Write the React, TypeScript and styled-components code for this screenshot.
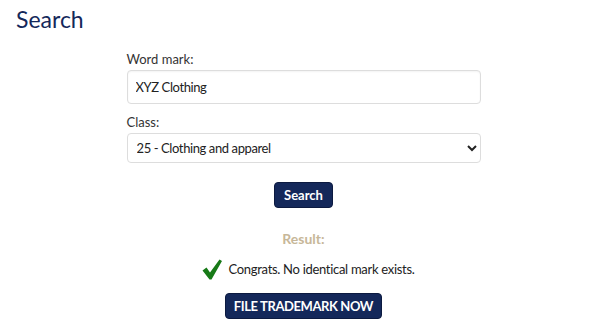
import styled, { createGlobalStyle } from "styled-components";

const GlobalStyle = createGlobalStyle`
  body {
    margin: 0;
    background: #ffffff;
    font-family: Lato, "Open Sans", sans-serif;
    color: #222222;
  }
`;

const Page = styled.div`
  padding: 0 16px;
`;

const Title = styled.h1`
  margin: 5px 0 0 0;
  font-size: 23px;
  font-weight: 400;
  color: #14285a;
  line-height: 28px;
`;

const Content = styled.div`
  padding-left: 7px;
`;

const Form = styled.form`
  width: 354px;
  margin: 18px auto 0 auto;
  display: flex;
  flex-direction: column;
`;

const Label = styled.label`
  font-size: 13px;
  line-height: 16px;
  color: #333333;
  margin-bottom: 3px;
`;

const Field = styled.div`
  display: flex;
  flex-direction: column;
  margin-bottom: 10px;
`;

const TextInput = styled.input`
  height: 34px;
  box-sizing: border-box;
  border: 1px solid #dddddd;
  border-radius: 4px;
  padding: 0 8px;
  font-family: inherit;
  font-size: 13px;
  letter-spacing: -0.4px;
  color: #222222;
  outline: none;
  box-shadow: inset 0 1px 2px rgba(0, 0, 0, 0.05);
`;

const Select = styled.select`
  height: 30px;
  box-sizing: border-box;
  border: 1px solid #dddddd;
  border-radius: 4px;
  padding: 0 5px;
  font-family: inherit;
  font-size: 13px;
  letter-spacing: -0.4px;
  color: #222222;
  background: #ffffff;
`;

const Center = styled.div`
  display: flex;
  flex-direction: column;
  align-items: center;
`;

const Button = styled.button<{ $caps?: boolean }>`
  background: #14285a;
  color: #ffffff;
  border: 1px solid #0c1a40;
  border-radius: 4px;
  font-family: inherit;
  font-weight: 700;
  font-size: 13px;
  letter-spacing: ${(p) => (p.$caps ? "-0.4px" : "0")};
  height: 26px;
  padding: 0 ${(p) => (p.$caps ? "8px" : "9px")};
  text-transform: ${(p) => (p.$caps ? "uppercase" : "none")};
  cursor: pointer;
`;

const ResultTitle = styled.div`
  margin-top: 22px;
  font-size: 14px;
  line-height: 18px;
  font-weight: 700;
  color: #c7b799;
`;

const Message = styled.div`
  margin-top: 10px;
  padding-left: 10px;
  display: flex;
  align-items: center;
  gap: 6px;
  font-size: 13px;
  letter-spacing: -0.3px;
  line-height: 22px;
  color: #222222;
  margin-bottom: 13px;
`;

const Check = styled.svg`
  width: 20px;
  height: 21px;
`;

const App = () => {
  return (
    <>
      <GlobalStyle />
      <Page>
        <Title>Search</Title>
        <Content>
          <Form onSubmit={(e) => e.preventDefault()}>
            <Label>Word mark:</Label>
            <Field>
              <TextInput type="text" defaultValue="XYZ Clothing" />
            </Field>
            <Label>Class:</Label>
            <Field>
              <Select defaultValue="25">
                <option value="25">25 - Clothing and apparel</option>
              </Select>
            </Field>
          </Form>
          <Center>
            <Button type="button" style={{ marginTop: 9 }}>Search</Button>
            <ResultTitle>Result:</ResultTitle>
            <Message>
              <Check viewBox="0 0 20 21">
                <path d="M0.5 11.5 L4.5 8.5 L8 13.5 L17.5 0.5 L20 2 L9.5 20.5 L7.5 20.5 Z" fill="#177a17" />
              </Check>
              Congrats. No identical mark exists.
            </Message>
            <Button type="button" $caps>File trademark now</Button>
          </Center>
        </Content>
      </Page>
    </>
  );
};

export default App;
